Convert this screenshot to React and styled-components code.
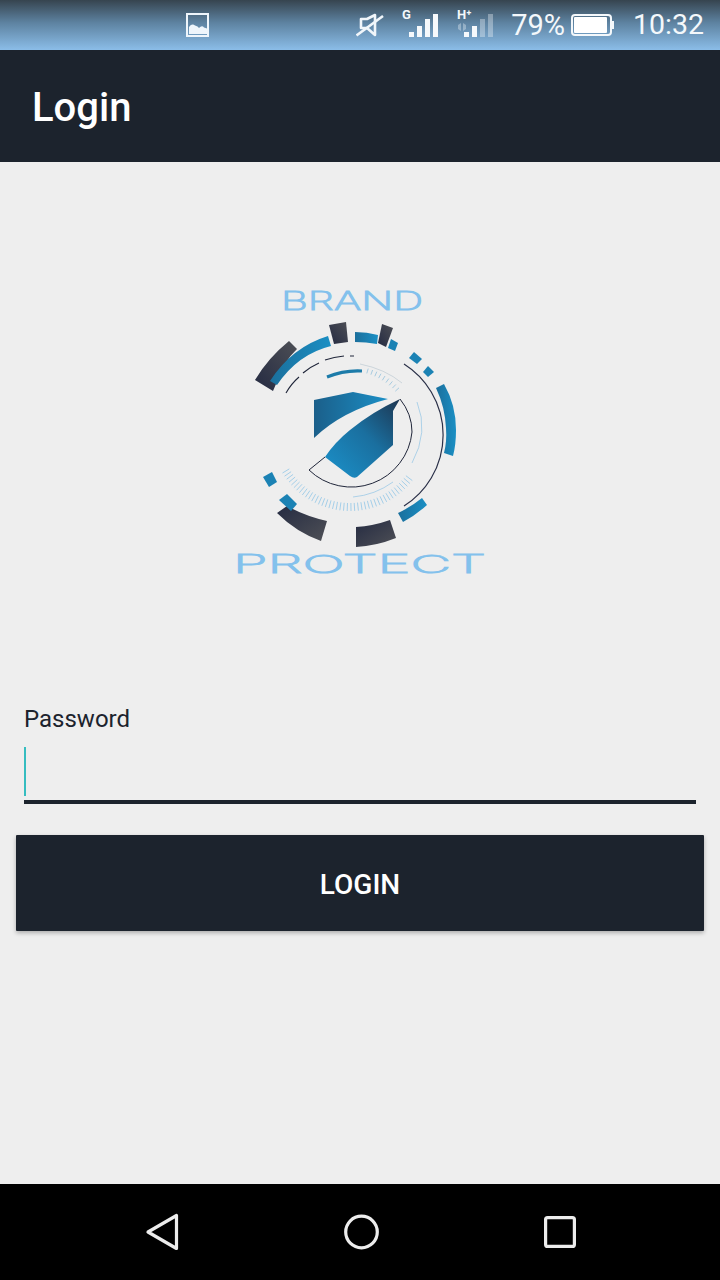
import React from "react";
import styled, { createGlobalStyle } from "styled-components";

const GlobalStyle = createGlobalStyle`
  html, body {
    margin: 0;
    padding: 0;
    background: #eeeeee;
    font-family: Roboto, "Liberation Sans", sans-serif;
  }
`;

const Screen = styled.div`
  width: 720px;
  height: 1280px;
  display: flex;
  flex-direction: column;
  background: #eeeeee;
  overflow: hidden;
`;

const StatusBar = styled.div`
  height: 50px;
  flex: none;
  display: flex;
  align-items: center;
  padding: 0 16px 0 186px;
  box-sizing: border-box;
  background: linear-gradient(#36444f 0%, #5d82a0 45%, #8bbde8 100%);
  color: #f4f8fb;
`;

const Spacer = styled.div`
  flex: 1;
`;

const StatusText = styled.span`
  font-size: ${(props) => props.size}px;
  margin-left: ${(props) => props.gap || 0}px;
  line-height: 50px;
`;

const StatusIcon = styled.svg`
  display: block;
  flex: none;
  margin-left: ${(props) => props.gap || 0}px;
`;

const AppBar = styled.header`
  height: 112px;
  flex: none;
  display: flex;
  align-items: center;
  padding: 2px 0 0 32px;
  box-sizing: border-box;
  background: #1c232d;
`;

const Title = styled.h1`
  margin: 0;
  font-size: 40px;
  font-weight: 500;
  color: #ffffff;
`;

const Content = styled.main`
  flex: 1;
  display: flex;
  flex-direction: column;
  padding: 118px 16px 0;
`;

const Logo = styled.svg`
  display: block;
  flex: none;
  align-self: center;
`;

const Field = styled.div`
  margin: 123px 8px 0;
  display: flex;
  flex-direction: column;
`;

const FieldLabel = styled.label`
  font-size: 24px;
  line-height: 32px;
  color: #1c232d;
`;

const InputBox = styled.div`
  height: 53px;
  margin-top: 12px;
  border-bottom: 4px solid #1c232d;
`;

const Caret = styled.div`
  width: 2px;
  height: 49px;
  background: #35bdc0;
`;

const LoginButton = styled.button`
  height: 96px;
  margin-top: 31px;
  padding: 2px 0 0;
  border: none;
  border-radius: 1px;
  background: #1c232d;
  color: #ffffff;
  font-family: Roboto, "Liberation Sans", sans-serif;
  font-size: 28px;
  font-weight: 500;
  box-shadow: 0 2px 4px rgba(0, 0, 0, 0.28);
`;

const NavBar = styled.nav`
  height: 96px;
  flex: none;
  display: flex;
  align-items: center;
  justify-content: space-between;
  padding: 0 144px 0 145px;
  background: #000000;
`;

const LogoText = styled.text`
  font-family: Inter, "DejaVu Sans", sans-serif;
  font-weight: 200;
  fill: #83c1ec;
  stroke: #83c1ec;
  stroke-width: 0.9px;
`;

const polar = (r, deg) => {
  const a = (deg * Math.PI) / 180;
  return [350 + r * Math.sin(a), 432 - r * Math.cos(a)];
};

const lowerTicks = [];
for (let deg = 128; deg <= 241; deg += 2.7) lowerTicks.push(deg);
const upperTicks = [];
for (let deg = 16; deg <= 50; deg += 4) upperTicks.push(deg);

const tickPath = (list, r1, r2) =>
  list
    .map((deg) => {
      const [x1, y1] = polar(r1, deg);
      const [x2, y2] = polar(r2, deg);
      return `M${x1.toFixed(1)} ${y1.toFixed(1)}L${x2.toFixed(1)} ${y2.toFixed(1)}`;
    })
    .join("");

const BrandLogo = () => (
  <Logo width="280" height="300" viewBox="220 280 280 300">
    <defs>
      <linearGradient id="blue" x1="0" y1="0" x2="1" y2="0">
        <stop offset="0" stopColor="#1b6f9c" />
        <stop offset="1" stopColor="#1a8fc4" />
      </linearGradient>
      <linearGradient id="dark" x1="0" y1="1" x2="1" y2="0">
        <stop offset="0" stopColor="#242a42" />
        <stop offset="1" stopColor="#4d4f55" />
      </linearGradient>
      <linearGradient id="darkLow" x1="0" y1="0" x2="1" y2="1">
        <stop offset="0" stopColor="#252b42" />
        <stop offset="1" stopColor="#4e5056" />
      </linearGradient>
      <linearGradient id="shieldTop" x1="0" y1="0" x2="1" y2="0">
        <stop offset="0" stopColor="#1b5f8a" />
        <stop offset="1" stopColor="#1b8fc6" />
      </linearGradient>
      <linearGradient id="shieldLow" x1="0" y1="1" x2="1" y2="0">
        <stop offset="0" stopColor="#1b92cb" />
        <stop offset="0.55" stopColor="#1a6f9f" />
        <stop offset="1" stopColor="#1d3550" />
      </linearGradient>
    </defs>

    <LogoText x="281" y="310" fontSize="25" textLength="142" lengthAdjust="spacingAndGlyphs">BRAND</LogoText>
    <LogoText x="233" y="573" fontSize="25" textLength="253" lengthAdjust="spacingAndGlyphs">PROTECT</LogoText>

    <path d="M255 380Q268 358 289 341L297 349Q283 362 276 384L273 391Z" fill="url(#dark)" />
    <path d="M270 381Q292 347 328 336L331 346Q298 354 277 385Z" fill="url(#blue)" />
    <path d="M329 325L346 322L348 342L334 344Z" fill="url(#dark)" />
    <path d="M355 332Q367 332 378 335L377 344Q366 342 355 342Z" fill="url(#blue)" />
    <path d="M382 324L393 328L386 347L378 343Z" fill="url(#dark)" />
    <path d="M391 339L398 343L395 351L388 348Z" fill="#1b82b4" />
    <path d="M414 352L422 359L417 364L409 358Z" fill="#1b82b4" />
    <path d="M428 366L434 372L428 377L423 372Z" fill="#1b82b4" />
    <path d="M444 384Q456 405 456 430Q456 445 453 456L444 453Q447 442 446 428Q445 407 436 388Z" fill="url(#blue)" />

    <path d="M404 364A84 84 0 0 1 404 506" fill="none" stroke="#2a3048" strokeWidth="1.2" />
    <path d="M286 393Q291 384 299 377M303 373Q310 367 319 363M325 360Q334 357 344 356M350 356H354" fill="none" stroke="#20263a" strokeWidth="1.1" />
    <path d="M327 377Q344 370 362 371" fill="none" stroke="#1c7ba9" strokeWidth="3" />
    <path d="M360 364Q385 369 402 383" fill="none" stroke="#c3ced6" strokeWidth="0.8" />
    <path d={tickPath(upperTicks, 61, 66)} stroke="#9ec6de" strokeWidth="0.9" />
    <path d="M417 402Q429 432 412 463M353 497Q375 495 393 482" fill="none" stroke="#9cc9e6" strokeWidth="0.8" />
    <path d={tickPath(lowerTicks, 71, 79)} stroke="#9ccbe8" strokeWidth="0.9" />

    <path d="M314 400L353 392L388 399Q342 411 314 438Z" fill="url(#shieldTop)" />
    <path d="M400 399L393 411V445L357 477Q354 479 350 476L325 457Q335 442 350 430Q372 412 400 399Z" fill="url(#shieldLow)" />
    <path d="M400 399Q412 414 412 432A61 61 0 0 1 309 470L325 457" fill="none" stroke="#20263a" strokeWidth="1" />

    <path d="M263 477L272 472L277 482L269 487Z" fill="#1b82b4" />
    <path d="M277 513L287 506Q305 516 327 521L321 541Q296 532 277 513Z" fill="url(#darkLow)" />
    <path d="M279 500L287 494L297 504L291 511Z" fill="#1b82b4" />
    <path d="M356 527Q373 526 390 520L396 538Q376 546 356 547Z" fill="url(#darkLow)" />
    <path d="M398 513Q411 507 422 498L427 505Q416 515 403 522Z" fill="url(#blue)" />
  </Logo>
);

const ImageIcon = () => (
  <StatusIcon width="24" height="24" viewBox="0 0 24 24">
    <rect x="1" y="1" width="21" height="22" fill="none" stroke="#eef5fb" strokeWidth="2" />
    <path d="M3 21V14Q6 10 9 12.500Q12 13 13 15Q16 12 18 14.500L21 15.500V21Z" fill="#eef5fb" />
  </StatusIcon>
);

const MuteIcon = () => (
  <StatusIcon width="28" height="24" viewBox="0 0 28 24">
    <path d="M5 6H11L19 2V22L11 15H5Z" fill="none" stroke="#f1f6fa" strokeWidth="2.600" strokeLinejoin="round" />
    <path d="M0.500 22.500L27 3" stroke="#f1f6fa" strokeWidth="2.600" />
  </StatusIcon>
);

const SignalIcon = ({ label, strong, data }) => {
  const bars = [
    [7, 22, 5, 5],
    [15, 16, 5, 11],
    [23, 9, 5, 18],
    [31, 4, 5, 23],
  ];
  return (
    <StatusIcon width="37" height="46" viewBox="0 -8 37 46" gap={18}>
      <text x="0" y="9" fontFamily="Roboto, sans-serif" fontSize="13" fontWeight="700" fill="#f4f8fb">{label}</text>
      {data && <path d="M1 15L4 13V21L1 19ZM6 13L9 15V19L6 21Z" fill="#f4f8fb" opacity="0.35" />}
      {bars.map(([x, y, w, h], i) => (
        <rect key={x} x={x} y={y} width={w} height={h} fill="#f6f9fc" opacity={i < strong ? 1 : 0.35} />
      ))}
    </StatusIcon>
  );
};

const BatteryIcon = () => (
  <StatusIcon width="44" height="22" viewBox="0 0 44 22" gap={6}>
    <rect x="1" y="1" width="39" height="20" rx="3" fill="none" stroke="#f4f8fb" strokeWidth="2" />
    <rect x="3" y="3" width="33" height="16" rx="1" fill="#ffffff" />
    <rect x="41" y="7" width="2" height="8" fill="#f4f8fb" />
  </StatusIcon>
);

const BackIcon = () => (
  <svg width="34" height="38" viewBox="0 0 34 38">
    <path d="M31.500 2.500V35.500L3 19Z" fill="none" stroke="#ededed" strokeWidth="3.200" strokeLinejoin="round" />
  </svg>
);

const HomeIcon = () => (
  <svg width="36" height="36" viewBox="0 0 36 36">
    <circle cx="17.500" cy="18" r="15.800" fill="none" stroke="#ededed" strokeWidth="3.200" />
  </svg>
);

const RecentIcon = () => (
  <svg width="32" height="32" viewBox="0 0 32 32">
    <rect x="1.600" y="1.600" width="28.800" height="28.800" rx="2" fill="none" stroke="#ededed" strokeWidth="3.200" />
  </svg>
);

export default function App() {
  return (
    <Screen>
      <GlobalStyle />
      <StatusBar>
        <ImageIcon />
        <Spacer />
        <MuteIcon />
        <SignalIcon label="G" strong={4} />
        <SignalIcon label="H⁺" strong={2} data />
        <StatusText size={29} gap={17}>79%</StatusText>
        <BatteryIcon />
        <StatusText size={28.5} gap={18}>10:32</StatusText>
      </StatusBar>
      <AppBar>
        <Title>Login</Title>
      </AppBar>
      <Content>
        <BrandLogo />
        <Field>
          <FieldLabel>Password</FieldLabel>
          <InputBox>
            <Caret />
          </InputBox>
        </Field>
        <LoginButton>LOGIN</LoginButton>
      </Content>
      <NavBar>
        <BackIcon />
        <HomeIcon />
        <RecentIcon />
      </NavBar>
    </Screen>
  );
}
